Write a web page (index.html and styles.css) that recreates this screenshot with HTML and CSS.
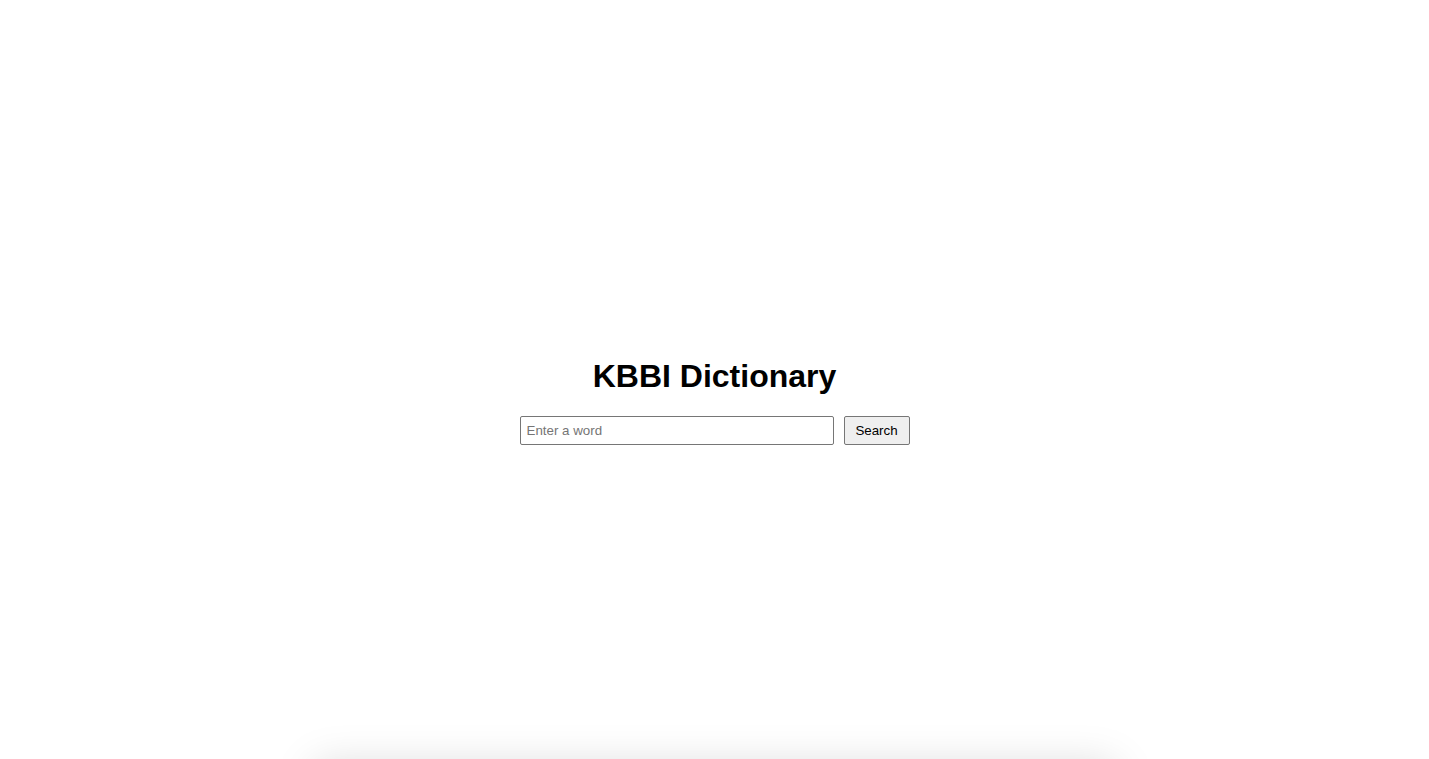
FILE: index.html
```html
<!DOCTYPE html>
<html lang="en">
<head>
<meta charset="utf-8">
<title>KBBI Dictionary</title>
<link rel="stylesheet" href="styles.css">
</head>
<body>
<main class="hero">
  <h1 class="title">KBBI Dictionary</h1>
  <form class="search-form">
    <input class="search-input" type="text" placeholder="Enter a word">
    <button class="search-button" type="button">Search</button>
  </form>
</main>
<section class="results"></section>
</body>
</html>
```
FILE: styles.css
```css
html, body {
  margin: 0;
  padding: 0;
  background: #ffffff;
}
body {
  font-family: "Liberation Sans", Arial, sans-serif;
  color: #000;
}
.hero {
  height: 100vh;
  box-sizing: border-box;
  padding-top: 44px;
  display: flex;
  flex-direction: column;
  align-items: center;
  justify-content: center;
}
.title {
  margin: 0 0 21px;
  font-size: 32px;
  font-weight: bold;
  line-height: 37px;
}
.search-form {
  display: flex;
  gap: 10px;
}
.search-input {
  width: 300px;
  padding: 6px;
  border: 1px solid #767676;
  border-radius: 2px;
  font-family: "Liberation Sans", Arial, sans-serif;
  font-size: 13.3333px;
  line-height: 15px;
  margin: 0;
  color: #000;
}
.search-input::placeholder {
  color: #757575;
}
.search-button {
  width: 66px;
  padding: 6px 0;
  border: 1px solid #767676;
  border-radius: 2px;
  background: #efefef;
  font-family: "Liberation Sans", Arial, sans-serif;
  font-size: 13.3333px;
  line-height: 15px;
  margin: 0;
  color: #000;
}
.results {
  width: 800px;
  height: 200px;
  margin: 6px auto 0;
  background: #fff;
  box-shadow: 0 0 40px rgba(0, 0, 0, 0.15);
}
```
